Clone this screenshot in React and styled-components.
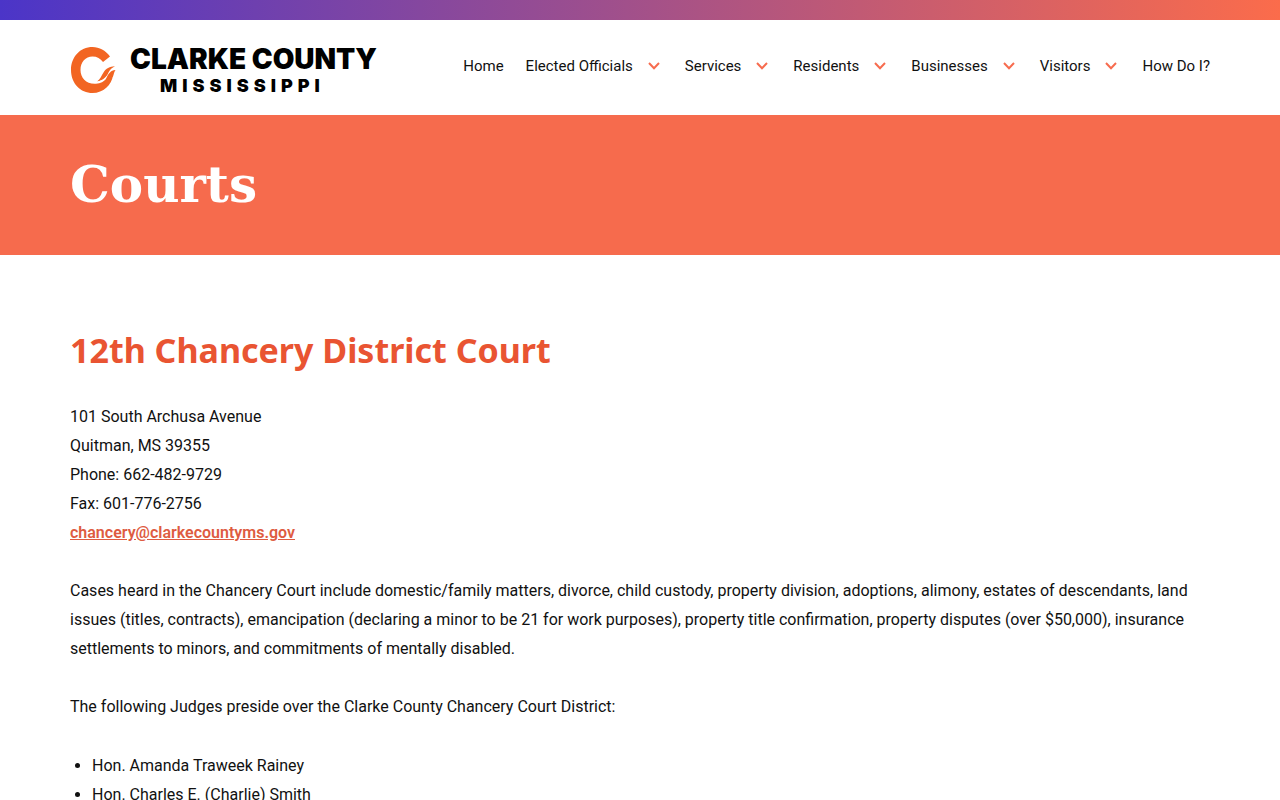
import React from 'react';
import styled, { createGlobalStyle } from 'styled-components';

const GlobalStyle = createGlobalStyle`
  *, *::before, *::after { box-sizing: border-box; }
  html { scrollbar-width: none; }
  body {
    margin: 0;
    background: #fff;
    color: #111;
    font-family: Roboto, "Liberation Sans", sans-serif;
    font-size: 16px;
    line-height: 29px;
  }
`;

const Page = styled.div`
  min-height: 100vh;
`;

const AccentBar = styled.div`
  height: 20px;
  background: linear-gradient(90deg, #4b35c8, #fb6c4b);
`;

const Container = styled.div`
  max-width: 1180px;
  margin: 0 auto;
  padding: 0 20px;
`;

const HeaderRow = styled(Container)`
  display: flex;
  align-items: center;
  justify-content: space-between;
  padding-top: 23px;
  padding-bottom: 18px;
`;

const Brand = styled.a`
  display: flex;
  align-items: center;
  gap: 13px;
  color: #000;
  text-decoration: none;
`;

const BrandText = styled.span`
  display: flex;
  flex-direction: column;
  font-family: Inter, Roboto, sans-serif;
  font-weight: 900;
  white-space: nowrap;
`;

const BrandName = styled.span`
  font-size: 28px;
  line-height: 32px;
`;

const BrandState = styled.span`
  padding-left: 30px;
  font-size: 18px;
  line-height: 22px;
  letter-spacing: 5px;
`;

const NavList = styled.ul`
  display: flex;
  align-items: center;
  gap: 22px;
  margin: 0;
  padding: 0 0 8px;
  list-style: none;
`;

const NavItem = styled.li`
  display: flex;
  align-items: center;
  white-space: nowrap;
`;

const NavLink = styled.a`
  color: #111;
  font-size: 15px;
  text-decoration: none;
`;

const Toggle = styled.button`
  display: flex;
  margin: 0 0 0 12px;
  padding: 3px;
  border: 0;
  background: none;
  color: #f76c4f;
`;

const Banner = styled.div`
  padding: 40px 0;
  background: #f66b4d;
`;

const PageTitle = styled.h1`
  margin: 0;
  color: #fff;
  font: bold 50px/60px "DejaVu Serif", serif;
`;

const Content = styled(Container)`
  padding-top: 72px;
`;

const SectionTitle = styled.h2`
  margin: 0 0 28px;
  color: #e95432;
  font: 700 34px/47px "Noto Sans", "Open Sans", sans-serif;
`;

const Paragraph = styled.p`
  margin: 0 0 29px;
`;

const MailLink = styled.a`
  color: #de5b41;
  font-weight: 600;
`;

const JudgeList = styled.ul`
  margin: 0;
  padding: 1px 0 0 22px;
`;

const Logo = () => (
  <svg width="47" height="48" viewBox="0 0 47 48" aria-hidden="true">
    <path
      fill="#f26522"
      d="M40 10.500C35.500 4.500 29.500 1 22.500 1C10 1 1 11 1 24C1 37.500 10.500 47 22.500 47C33.500 47 41.500 39 43 29.500C40.500 29 38.500 30 36.500 32.500C34 35.500 30.500 37.500 26 37.800C16.500 38.500 10.500 32 10.500 24C10.500 16 15.500 10.500 22.500 10.500C27 10.500 30.500 12.500 33 16Z"
    />
    <path
      fill="#f26522"
      d="M27 35.500C30.500 33 31.500 29.500 33.500 26.500C36 22.500 39.500 20.500 45 20.300C42 22 40 23.500 38.500 26.500C36.500 31 33 34.500 27 35.500Z"
    />
    <path
      fill="none"
      stroke="#fff"
      strokeWidth="1"
      d="M27 36.200C34 35 37.500 31 39.300 27"
    />
    <path
      fill="#f26522"
      d="M36 33C38.500 27.500 40.500 24.500 45.500 24C44 26 44 28 43 30.500C41 32 39 33 36 33Z"
    />
  </svg>
);

const Chevron = () => (
  <svg width="12" height="8" viewBox="0 0 12 8" aria-hidden="true">
    <path d="M1 1L6 6.200L11 1" fill="none" stroke="currentColor" strokeWidth="2" />
  </svg>
);

const links = [
  { label: 'Home' },
  { label: 'Elected Officials', menu: true },
  { label: 'Services', menu: true },
  { label: 'Residents', menu: true },
  { label: 'Businesses', menu: true },
  { label: 'Visitors', menu: true },
  { label: 'How Do I?' },
];

export default function App() {
  return (
    <Page>
      <GlobalStyle />
      <AccentBar />
      <header>
        <HeaderRow>
          <Brand href="#">
            <Logo />
            <BrandText>
              <BrandName>CLARKE COUNTY</BrandName>
              <BrandState>MISSISSIPPI</BrandState>
            </BrandText>
          </Brand>
          <nav aria-label="Main">
            <NavList>
              {links.map(({ label, menu }) => (
                <NavItem key={label}>
                  <NavLink href="#">{label}</NavLink>
                  {menu && (
                    <Toggle type="button" aria-label={`${label} menu`}>
                      <Chevron />
                    </Toggle>
                  )}
                </NavItem>
              ))}
            </NavList>
          </nav>
        </HeaderRow>
      </header>
      <Banner>
        <Container>
          <PageTitle>Courts</PageTitle>
        </Container>
      </Banner>
      <Content as="main">
        <SectionTitle>12th Chancery District Court</SectionTitle>
        <Paragraph>
          101 South Archusa Avenue
          <br />
          Quitman, MS 39355
          <br />
          Phone: 662-482-9729
          <br />
          Fax: 601-776-2756
          <br />
          <MailLink href="mailto:chancery@clarkecountyms.gov">chancery@clarkecountyms.gov</MailLink>
        </Paragraph>
        <Paragraph>
          Cases heard in the Chancery Court include domestic/family matters, divorce, child custody,
          property division, adoptions, alimony, estates of descendants, land issues (titles,
          contracts), emancipation (declaring a minor to be 21 for work purposes), property title
          confirmation, property disputes (over $50,000), insurance settlements to minors, and
          commitments of mentally disabled.
        </Paragraph>
        <Paragraph>
          The following Judges preside over the Clarke County Chancery Court District:
        </Paragraph>
        <JudgeList>
          <li>Hon. Amanda Traweek Rainey</li>
          <li>Hon. Charles E. (Charlie) Smith</li>
        </JudgeList>
      </Content>
    </Page>
  );
}
